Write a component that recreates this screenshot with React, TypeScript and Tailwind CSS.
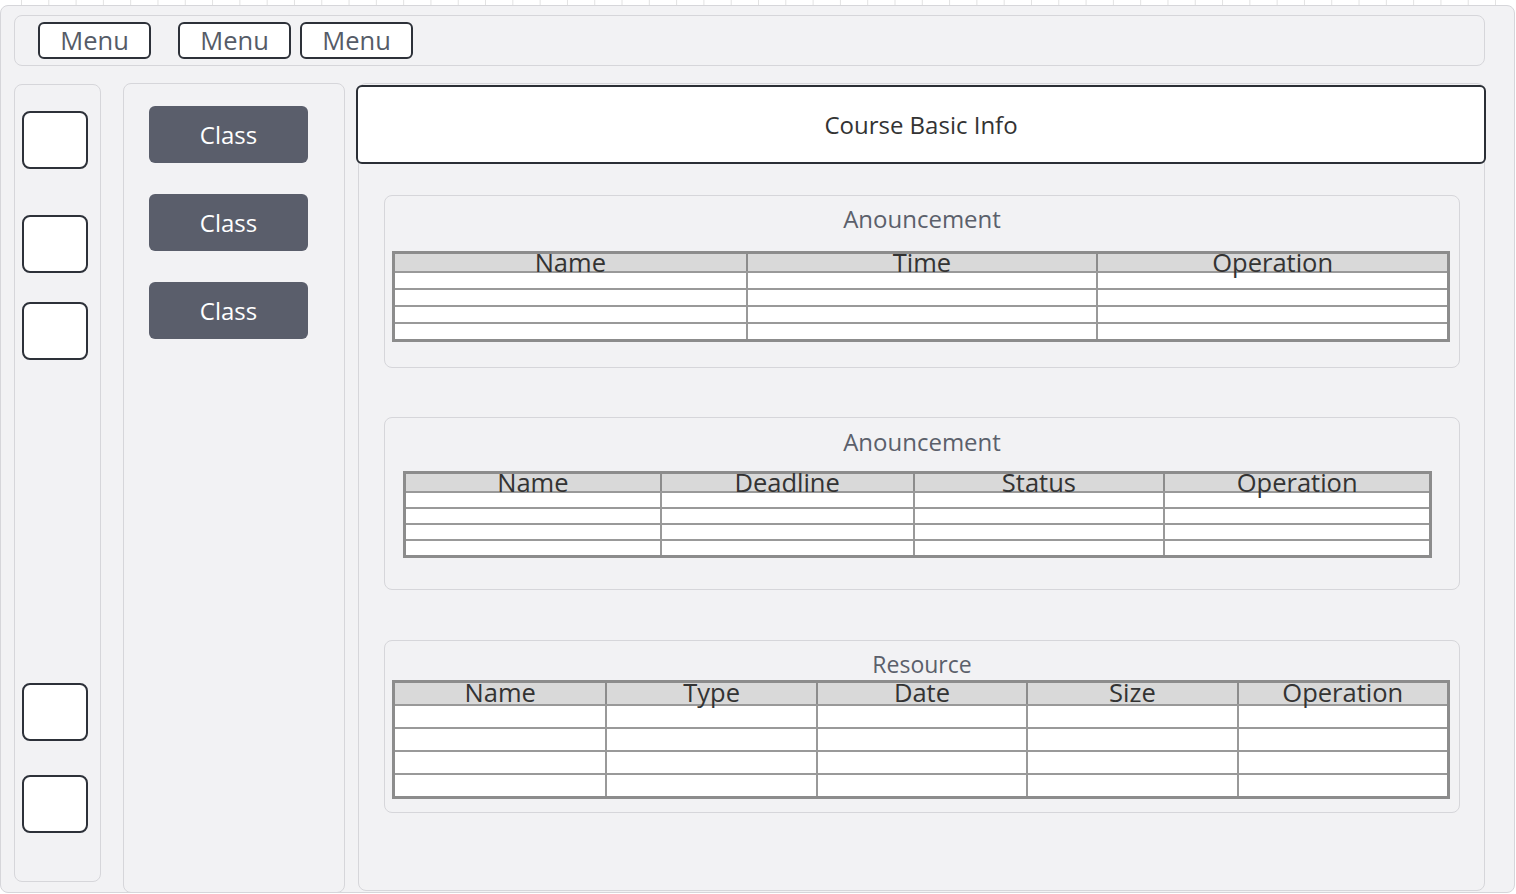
import React from 'react';

type TableProps = {
  headers: string[];
  gridCls: string;
  headCls: string;
  rowCls: string;
  className?: string;
};

function GridTable({ headers, gridCls, headCls, rowCls, className = '' }: TableProps) {
  const rows = [0, 1, 2, 3];
  return (
    <div className={`self-stretch border-[3px] border-[#8c8c8c] bg-white ${className}`}>
      <div className={`grid ${gridCls} bg-[#d9d9d9]`}>
        {headers.map((h, i) => (
          <div
            key={h}
            className={`${headCls} text-center text-[25.5px] text-[#333] ${i > 0 ? 'border-l-2 border-[#8c8c8c]' : ''}`}
          >
            {h}
          </div>
        ))}
      </div>
      {rows.map((r) => (
        <div key={r} className={`grid ${gridCls} border-t-2 border-[#999]`}>
          {headers.map((h, i) => (
            <div key={h} className={`${rowCls} ${i > 0 ? 'border-l-2 border-[#999]' : ''}`} />
          ))}
        </div>
      ))}
    </div>
  );
}

function Section({ title, titleCls, children }: { title: string; titleCls: string; children: React.ReactNode }) {
  return (
    <div className="flex h-[173px] flex-col items-center rounded-lg border border-[#d6d6da]">
      <div className={`text-[#5b606b] ${titleCls}`}>{title}</div>
      {children}
    </div>
  );
}

function MenuButton({ className = '' }: { className?: string }) {
  return (
    <button
      className={`flex h-[37px] w-[113px] items-center justify-center rounded-md border-2 border-[#2d3139] bg-white text-[25.5px] leading-none text-[#555b67] ${className}`}
    >
      Menu
    </button>
  );
}

function Square({ className = '' }: { className?: string }) {
  return <div className={`h-[58px] w-[66px] rounded-lg border-2 border-[#2d3139] bg-white ${className}`} />;
}

function ClassButton({ className = '' }: { className?: string }) {
  return (
    <button
      className={`flex h-[57px] w-[159px] items-center justify-center rounded-md bg-[#5a5e6b] text-[24px] text-white ${className}`}
    >
      Class
    </button>
  );
}

export default function App() {
  return (
    <div className="h-[894px] w-[1516px] overflow-hidden bg-white font-['Open_Sans',sans-serif]">
      <div className="h-[5px] bg-[linear-gradient(90deg,#e2e2e2_1px,transparent_1px)] bg-size-[27.3px_5px] bg-position-[21px_0]" />
      <div className="h-[888px] w-[1515px] rounded-lg border border-[#d6d6da] bg-[#f2f2f4] pt-[9px] pr-[29px] pl-[13px]">
        {/* top menu bar */}
        <div className="flex h-[51px] items-center rounded-lg border border-[#d6d6da] pl-[23px]">
          <MenuButton />
          <MenuButton className="ml-[27px]" />
          <MenuButton className="ml-[9px]" />
        </div>

        <div className="mt-[17px] flex items-start">
          {/* icon rail */}
          <div className="mt-px flex h-[798px] w-[87px] flex-col rounded-lg border border-[#d6d6da] pl-[7px]">
            <Square className="mt-[26px]" />
            <Square className="mt-[46px]" />
            <Square className="mt-[29px]" />
            <Square className="mt-[323px]" />
            <Square className="mt-[34px]" />
          </div>

          {/* class list */}
          <div className="ml-[22px] flex h-[810px] w-[222px] flex-col items-start rounded-lg border border-[#d6d6da] pl-[25px]">
            <ClassButton className="mt-[22px]" />
            <ClassButton className="mt-[31px]" />
            <ClassButton className="mt-[31px]" />
          </div>

          {/* main */}
          <div className="ml-[13px] flex h-[808px] flex-1 flex-col rounded-lg border border-[#d6d6da] pr-[24px] pl-[25px]">
            <div className="mt-px -mr-[26px] -ml-[28px] flex h-[79px] items-center justify-center rounded-md border-2 border-[#2b2f36] bg-white text-[24px] text-[#333]">
              Course Basic Info
            </div>

            <div className="mt-[31px]">
              <Section title="Anouncement" titleCls="mt-[6px] text-[24px] leading-[33px]">
                <GridTable
                  headers={['Name', 'Time', 'Operation']}
                  gridCls="grid-cols-3"
                  headCls="h-[17px] leading-[16px]"
                  rowCls="h-[15px]"
                  className="mt-[16px] mr-[9px] ml-[7px]"
                />
              </Section>
            </div>

            <div className="mt-[49px]">
              <Section title="Anouncement" titleCls="mt-[7px] text-[24px] leading-[33px]">
                <GridTable
                  headers={['Name', 'Deadline', 'Status', 'Operation']}
                  gridCls="grid-cols-[255fr_254fr_252fr_267fr]"
                  headCls="h-[17px] leading-[16px]"
                  rowCls="h-[14px]"
                  className="mt-[13px] mr-[27px] ml-[18px]"
                />
              </Section>
            </div>

            <div className="mt-[50px]">
              <Section title="Resource" titleCls="mt-[10px] text-[23px] leading-[26px]">
                <GridTable
                  headers={['Name', 'Type', 'Date', 'Size', 'Operation']}
                  gridCls="grid-cols-5"
                  headCls="h-[21px] leading-[18px]"
                  rowCls="h-[21px]"
                  className="mt-[3px] mr-[9px] ml-[7px]"
                />
              </Section>
            </div>
          </div>
        </div>
      </div>
    </div>
  );
}
